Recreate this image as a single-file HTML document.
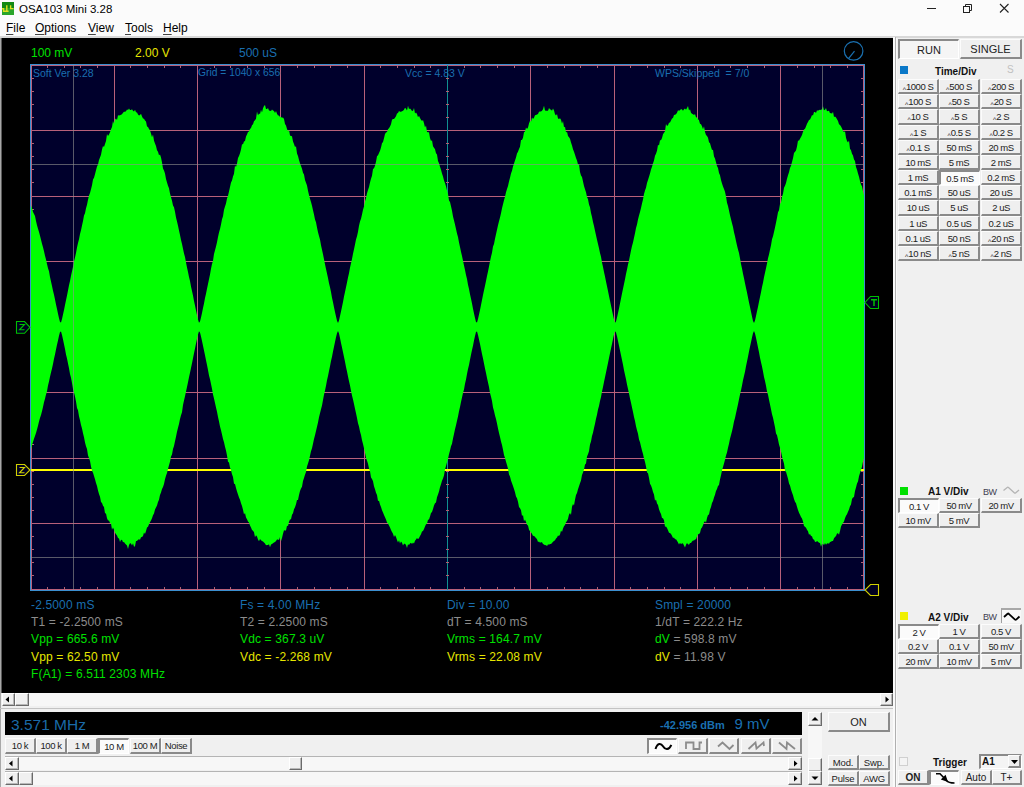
<!DOCTYPE html><html><head><meta charset="utf-8"><style>
*{margin:0;padding:0;box-sizing:border-box}
html,body{width:1024px;height:787px;overflow:hidden;background:#f0f0f0;font-family:"Liberation Sans",sans-serif}
.t{position:absolute;white-space:pre;line-height:1}
.b,.bp{position:absolute;text-align:center;white-space:pre;color:#222;background:#efefef;
  border-top:1px solid #fcfcfc;border-left:1px solid #fcfcfc;border-right:2px solid #8a8a8a;border-bottom:2px solid #8a8a8a}
.bp{background:#fbfbfb;border-top:2px solid #8a8a8a;border-left:2px solid #8a8a8a;border-right:1px solid #fff;border-bottom:1px solid #fff}
.abs{position:absolute}
.sb{position:absolute;background:#f0f0f0;border-top:1px solid #fff;border-left:1px solid #fff;border-right:1px solid #6a6a6a;border-bottom:1px solid #6a6a6a;box-shadow:inset -1px -1px 0 #b8b8b8}
</style></head><body>
<div class="abs" style="left:0;top:0;width:1024px;height:37px;background:#fbfbfb"></div>
<div class="abs" style="left:0;top:36px;width:1024px;height:2px;background:#d8d8d8"></div>
<svg class="abs" style="left:0;top:0" width="16" height="16"><rect x="2" y="2" width="12" height="13" fill="#2aa52a"/><rect x="2" y="2" width="12" height="6" fill="#138a13"/><path d="M2 8.7 H3.6 V11.3 H8.6 M6.8 11.2 V5.2 M10.6 5.2 V8.6 H13.5" fill="none" stroke="#e0e020" stroke-width="1.4"/></svg>
<div class="t" style="left:19px;top:4px;font-size:11.5px;color:#000;font-weight:normal;">OSA103 Mini 3.28</div>
<div class="abs" style="left:927px;top:8px;width:9px;height:1px;background:#222"></div>
<svg class="abs" style="left:0;top:0;overflow:visible" width="1" height="1"><rect x="963.5" y="6.5" width="6" height="6" fill="none" stroke="#222"/><path d="M965.5 6.5 V4.5 H971.5 V10.5 H969.5" fill="none" stroke="#222"/><path d="M1000 4 L1008.5 12.5 M1008.5 4 L1000 12.5" stroke="#222" stroke-width="1.1"/></svg>
<div class="t" style="left:6px;top:22px;font-size:12px;color:#000;font-weight:normal;"><u style="text-decoration:underline;text-decoration-color:#444;text-underline-offset:1.5px">F</u>ile</div>
<div class="t" style="left:35px;top:22px;font-size:12px;color:#000;font-weight:normal;"><u style="text-decoration:underline;text-decoration-color:#444;text-underline-offset:1.5px">O</u>ptions</div>
<div class="t" style="left:88px;top:22px;font-size:12px;color:#000;font-weight:normal;"><u style="text-decoration:underline;text-decoration-color:#444;text-underline-offset:1.5px">V</u>iew</div>
<div class="t" style="left:125px;top:22px;font-size:12px;color:#000;font-weight:normal;"><u style="text-decoration:underline;text-decoration-color:#444;text-underline-offset:1.5px">T</u>ools</div>
<div class="t" style="left:163px;top:22px;font-size:12px;color:#000;font-weight:normal;"><u style="text-decoration:underline;text-decoration-color:#444;text-underline-offset:1.5px">H</u>elp</div>
<div class="abs" style="left:0;top:38px;width:1px;height:749px;background:#a8a8a8"></div><div class="abs" style="left:1px;top:38px;width:1px;height:655px;background:#5a5a5a"></div>
<div class="abs" style="left:2px;top:38px;width:891px;height:655px;background:#000"></div>
<svg class="abs" style="left:0;top:0" width="1024" height="787" shape-rendering="crispEdges">
<rect x="30" y="64" width="835" height="527" fill="#3b8fd0"/>
<rect x="31" y="65" width="833" height="525" fill="#b8607a"/>
<rect x="32" y="66" width="831" height="523" fill="#00002c"/>
<rect x="114" y="65" width="1" height="525" fill="#b8607a"/>
<rect x="197" y="65" width="1" height="525" fill="#b8607a"/>
<rect x="280" y="65" width="1" height="525" fill="#b8607a"/>
<rect x="364" y="65" width="1" height="525" fill="#b8607a"/>
<rect x="530" y="65" width="1" height="525" fill="#b8607a"/>
<rect x="614" y="65" width="1" height="525" fill="#b8607a"/>
<rect x="697" y="65" width="1" height="525" fill="#b8607a"/>
<rect x="780" y="65" width="1" height="525" fill="#b8607a"/>
<rect x="31" y="130" width="833" height="1" fill="#b8607a"/>
<rect x="31" y="196" width="833" height="1" fill="#b8607a"/>
<rect x="31" y="261" width="833" height="1" fill="#b8607a"/>
<rect x="31" y="392" width="833" height="1" fill="#b8607a"/>
<rect x="31" y="458" width="833" height="1" fill="#b8607a"/>
<rect x="31" y="523" width="833" height="1" fill="#b8607a"/>
<rect x="447" y="65" width="1" height="525" fill="#109090"/>
<rect x="31" y="327" width="833" height="1" fill="#109090"/>
<path d="M47 66v1.5M47 587v2M47 326v3M64 66v1.5M64 587v2M64 326v3M80 66v1.5M80 587v2M80 326v3M97 66v1.5M97 587v2M97 326v3M130 66v1.5M130 587v2M130 326v3M147 66v1.5M147 587v2M147 326v3M164 66v1.5M164 587v2M164 326v3M180 66v1.5M180 587v2M180 326v3M214 66v1.5M214 587v2M214 326v3M230 66v1.5M230 587v2M230 326v3M247 66v1.5M247 587v2M247 326v3M264 66v1.5M264 587v2M264 326v3M297 66v1.5M297 587v2M297 326v3M314 66v1.5M314 587v2M314 326v3M330 66v1.5M330 587v2M330 326v3M347 66v1.5M347 587v2M347 326v3M380 66v1.5M380 587v2M380 326v3M397 66v1.5M397 587v2M397 326v3M414 66v1.5M414 587v2M414 326v3M430 66v1.5M430 587v2M430 326v3M464 66v1.5M464 587v2M464 326v3M480 66v1.5M480 587v2M480 326v3M497 66v1.5M497 587v2M497 326v3M514 66v1.5M514 587v2M514 326v3M547 66v1.5M547 587v2M547 326v3M564 66v1.5M564 587v2M564 326v3M580 66v1.5M580 587v2M580 326v3M597 66v1.5M597 587v2M597 326v3M630 66v1.5M630 587v2M630 326v3M647 66v1.5M647 587v2M647 326v3M664 66v1.5M664 587v2M664 326v3M680 66v1.5M680 587v2M680 326v3M714 66v1.5M714 587v2M714 326v3M730 66v1.5M730 587v2M730 326v3M747 66v1.5M747 587v2M747 326v3M764 66v1.5M764 587v2M764 326v3M797 66v1.5M797 587v2M797 326v3M814 66v1.5M814 587v2M814 326v3M830 66v1.5M830 587v2M830 326v3M847 66v1.5M847 587v2M847 326v3M32 78h2M861 78h2M446 78h3M32 91h2M861 91h2M446 91h3M32 104h2M861 104h2M446 104h3M32 117h2M861 117h2M446 117h3M32 143h2M861 143h2M446 143h3M32 156h2M861 156h2M446 156h3M32 169h2M861 169h2M446 169h3M32 182h2M861 182h2M446 182h3M32 209h2M861 209h2M446 209h3M32 222h2M861 222h2M446 222h3M32 235h2M861 235h2M446 235h3M32 248h2M861 248h2M446 248h3M32 274h2M861 274h2M446 274h3M32 287h2M861 287h2M446 287h3M32 300h2M861 300h2M446 300h3M32 313h2M861 313h2M446 313h3M32 340h2M861 340h2M446 340h3M32 353h2M861 353h2M446 353h3M32 366h2M861 366h2M446 366h3M32 379h2M861 379h2M446 379h3M32 405h2M861 405h2M446 405h3M32 418h2M861 418h2M446 418h3M32 431h2M861 431h2M446 431h3M32 444h2M861 444h2M446 444h3M32 471h2M861 471h2M446 471h3M32 484h2M861 484h2M446 484h3M32 497h2M861 497h2M446 497h3M32 510h2M861 510h2M446 510h3M32 536h2M861 536h2M446 536h3M32 549h2M861 549h2M446 549h3M32 562h2M861 562h2M446 562h3M32 575h2M861 575h2M446 575h3" stroke="#b06070" stroke-width="1" fill="none"/>
<rect x="31" y="469" width="833" height="2" fill="#ffff00"/>
<path d="M31,205.5 32,208.3 33,212.1 34,214.0 35,216.1 36,220.9 37,225.3 38,228.8 39,232.1 40,235.7 41,239.7 42,243.7 43,247.3 44,251.3 45,255.8 46,259.5 47,263.9 48,268.2 49,271.3 50,277.0 51,281.6 52,286.1 53,290.7 54,294.7 55,299.5 56,304.5 57,309.0 58,313.7 59,318.2 60,322.0 61,322.5 62,319.1 63,314.5 64,309.9 65,305.0 66,300.2 67,295.4 68,290.6 69,285.2 70,280.9 71,275.8 72,271.3 73,266.8 74,261.3 75,257.4 76,253.0 77,247.6 78,243.0 79,239.3 80,234.1 81,230.3 82,225.4 83,220.9 84,215.4 85,213.3 86,208.3 87,204.7 88,199.7 89,195.4 90,193.1 91,189.2 92,185.3 93,179.5 94,177.8 95,174.2 96,170.3 97,166.5 98,164.6 99,160.1 100,157.5 101,154.7 102,149.5 103,145.9 104,146.9 105,144.0 106,141.0 107,134.0 108,136.1 109,134.4 110,132.2 111,129.2 112,127.0 113,120.9 114,123.7 115,119.5 116,118.4 117,120.0 118,115.3 119,115.4 120,115.3 121,114.7 122,114.2 123,112.8 124,111.7 125,111.7 126,111.3 127,109.4 128,110.1 129,108.5 130,109.9 131,110.0 132,109.2 133,110.8 134,111.4 135,109.8 136,112.2 137,112.5 138,114.5 139,115.4 140,115.0 141,113.7 142,116.6 143,118.6 144,118.7 145,120.6 146,121.4 147,126.4 148,127.0 149,128.9 150,130.3 151,133.6 152,137.2 153,134.4 154,140.8 155,143.5 156,146.0 157,150.2 158,151.8 159,155.2 160,154.6 161,157.6 162,162.4 163,168.4 164,170.6 165,173.4 166,179.1 167,182.5 168,185.8 169,188.3 170,193.4 171,197.3 172,200.7 173,205.5 174,207.3 175,211.7 176,217.4 177,221.4 178,225.7 179,230.5 180,234.9 181,239.9 182,244.1 183,248.7 184,253.4 185,257.0 186,262.6 187,267.5 188,271.9 189,276.9 190,280.9 191,286.4 192,291.1 193,295.6 194,300.9 195,305.5 196,310.4 197,315.0 198,319.6 199,322.8 200,321.6 201,317.6 202,312.9 203,308.1 204,303.4 205,298.1 206,293.8 207,288.7 208,283.9 209,279.3 210,274.6 211,268.7 212,264.1 213,260.7 214,253.9 215,250.2 216,246.4 217,242.3 218,237.0 219,232.5 220,229.1 221,224.6 222,219.3 223,216.3 224,209.8 225,206.6 226,203.5 227,198.5 228,195.7 229,191.6 230,186.9 231,182.6 232,180.5 233,176.5 234,173.8 235,165.6 236,167.0 237,163.5 238,158.0 239,156.1 240,153.3 241,149.6 242,144.3 243,144.3 244,141.4 245,141.0 246,136.4 247,134.4 248,132.0 249,131.4 250,129.1 251,127.9 252,125.3 253,124.2 254,121.2 255,120.2 256,118.8 257,111.6 258,115.4 259,113.5 260,113.9 261,109.8 262,112.4 263,108.3 264,106.1 265,105.0 266,109.0 267,109.0 268,108.1 269,110.4 270,110.8 271,111.0 272,109.5 273,110.5 274,111.1 275,112.9 276,111.0 277,113.7 278,115.6 279,115.4 280,116.9 281,117.1 282,117.7 283,117.5 284,119.1 285,123.9 286,125.6 287,129.0 288,131.4 289,129.8 290,135.5 291,136.1 292,136.2 293,141.4 294,144.1 295,146.9 296,146.2 297,153.5 298,155.9 299,159.9 300,163.3 301,166.0 302,168.7 303,172.8 304,174.4 305,180.0 306,182.8 307,185.5 308,190.8 309,195.1 310,198.7 311,202.0 312,205.7 313,210.3 314,214.5 315,219.4 316,222.2 317,227.6 318,232.2 319,236.1 320,239.4 321,245.2 322,249.8 323,254.2 324,259.2 325,264.2 326,269.0 327,273.6 328,278.1 329,283.3 330,287.3 331,292.0 332,297.7 333,302.2 334,307.3 335,312.0 336,316.6 337,320.8 338,323.0 339,320.4 340,316.0 341,311.5 342,306.8 343,301.9 344,296.6 345,292.1 346,287.3 347,282.5 348,277.5 349,273.2 350,267.7 351,263.2 352,259.0 353,253.8 354,249.3 355,244.6 356,239.6 357,236.3 358,231.7 359,225.8 360,221.6 361,218.7 362,214.4 363,209.8 364,206.4 365,201.3 366,198.1 367,193.2 368,189.9 369,187.0 370,182.4 371,178.8 372,175.7 373,168.9 374,168.3 375,165.8 376,161.7 377,156.2 378,155.2 379,153.1 380,150.8 381,147.4 382,143.3 383,142.0 384,138.3 385,133.9 386,132.4 387,132.1 388,129.3 389,128.2 390,126.6 391,124.2 392,119.8 393,118.9 394,119.1 395,117.7 396,116.3 397,113.4 398,113.1 399,111.1 400,111.8 401,111.8 402,111.3 403,110.7 404,109.8 405,107.8 406,108.7 407,110.6 408,105.7 409,108.9 410,108.5 411,109.4 412,111.0 413,110.7 414,108.0 415,113.4 416,112.5 417,113.9 418,117.3 419,115.8 420,118.1 421,119.7 422,121.1 423,120.0 424,123.3 425,127.4 426,125.6 427,132.1 428,132.2 429,132.3 430,138.1 431,141.1 432,140.3 433,146.3 434,147.8 435,149.2 436,153.3 437,154.5 438,160.9 439,163.2 440,166.7 441,169.8 442,173.5 443,176.4 444,180.5 445,182.9 446,186.3 447,190.5 448,194.1 449,200.5 450,201.9 451,206.2 452,210.8 453,216.4 454,220.4 455,224.4 456,229.0 457,233.4 458,236.9 459,242.5 460,247.1 461,251.7 462,255.9 463,260.7 464,265.6 465,270.1 466,275.0 467,278.9 468,284.8 469,289.1 470,294.2 471,298.8 472,303.6 473,308.8 474,313.6 475,318.0 476,321.9 477,322.6 478,319.0 479,314.6 480,309.9 481,305.0 482,300.0 483,294.9 484,290.2 485,285.8 486,280.9 487,276.0 488,271.6 489,266.4 490,261.3 491,256.8 492,252.7 493,246.5 494,243.9 495,238.8 496,234.2 497,229.7 498,225.2 499,221.3 500,217.6 501,213.2 502,208.2 503,204.3 504,200.2 505,196.7 506,192.2 507,189.1 508,185.9 509,181.6 510,177.7 511,173.5 512,170.7 513,166.6 514,163.5 515,160.6 516,157.6 517,153.5 518,151.8 519,149.1 520,146.8 521,139.9 522,140.1 523,137.8 524,132.2 525,131.4 526,127.5 527,129.1 528,127.5 529,123.4 530,120.8 531,121.7 532,117.4 533,118.9 534,117.7 535,115.2 536,115.1 537,114.6 538,114.1 539,111.8 540,111.6 541,111.5 542,110.7 543,109.3 544,105.8 545,110.6 546,110.8 547,110.8 548,110.8 549,108.1 550,109.2 551,109.8 552,110.8 553,108.6 554,110.4 555,114.3 556,115.4 557,114.0 558,118.5 559,118.9 560,118.2 561,119.7 562,123.7 563,121.1 564,127.2 565,126.7 566,132.6 567,131.7 568,136.1 569,137.3 570,138.8 571,142.5 572,145.6 573,149.2 574,151.7 575,154.8 576,158.1 577,160.5 578,164.4 579,164.2 580,171.9 581,175.4 582,177.1 583,181.4 584,186.1 585,189.2 586,192.3 587,197.0 588,199.3 589,204.6 590,207.2 591,213.1 592,217.0 593,222.0 594,226.1 595,230.7 596,235.2 597,239.8 598,244.1 599,248.3 600,252.9 601,256.7 602,262.5 603,267.1 604,272.0 605,276.5 606,281.4 607,286.3 608,290.9 609,296.1 610,300.8 611,305.6 612,310.2 613,315.1 614,319.5 615,322.7 616,321.6 617,317.6 618,313.1 619,308.4 620,303.4 621,298.6 622,293.5 623,288.8 624,284.1 625,279.2 626,274.1 627,269.5 628,264.5 629,260.6 630,255.4 631,250.5 632,246.0 633,242.4 634,237.7 635,233.3 636,228.1 637,224.6 638,219.4 639,215.6 640,212.0 641,208.0 642,203.4 643,199.5 644,194.1 645,190.6 646,187.8 647,183.0 648,180.0 649,176.7 650,173.5 651,169.5 652,166.7 653,163.2 654,160.4 655,155.7 656,153.7 657,150.7 658,144.7 659,145.4 660,140.2 661,140.2 662,137.9 663,134.3 664,132.8 665,131.2 666,124.0 667,126.1 668,125.2 669,122.8 670,122.6 671,120.6 672,118.6 673,118.1 674,114.9 675,114.8 676,114.3 677,112.7 678,110.2 679,110.8 680,110.3 681,109.1 682,109.4 683,110.8 684,109.2 685,108.6 686,109.8 687,108.0 688,106.1 689,110.5 690,109.2 691,112.7 692,113.7 693,114.3 694,114.9 695,113.9 696,117.3 697,117.5 698,119.2 699,120.3 700,123.8 701,124.3 702,126.2 703,129.2 704,126.2 705,132.1 706,135.1 707,136.0 708,137.8 709,142.3 710,143.3 711,146.8 712,150.1 713,149.7 714,156.6 715,158.4 716,162.2 717,166.0 718,168.1 719,173.1 720,175.3 721,180.1 722,183.5 723,186.5 724,189.1 725,191.7 726,196.6 727,202.8 728,205.9 729,210.4 730,215.3 731,219.2 732,223.3 733,227.1 734,232.2 735,236.2 736,240.9 737,245.4 738,249.6 739,253.0 740,258.3 741,263.9 742,268.4 743,273.8 744,278.2 745,283.2 746,288.0 747,292.5 748,297.4 749,302.4 750,307.0 751,311.8 752,316.6 753,320.9 754,322.9 755,320.4 756,316.0 757,311.3 758,306.7 759,301.7 760,296.9 761,292.3 762,287.1 763,282.8 764,277.2 765,272.7 766,268.2 767,263.6 768,258.3 769,254.5 770,249.7 771,245.2 772,239.2 773,236.3 774,232.1 775,227.4 776,222.7 777,217.8 778,212.2 779,210.3 780,204.1 781,202.2 782,196.8 783,193.8 784,187.8 785,185.8 786,182.9 787,178.7 788,175.2 789,172.3 790,168.1 791,165.8 792,161.9 793,158.3 794,153.1 795,151.7 796,150.6 797,146.4 798,140.5 799,140.7 800,138.8 801,137.1 802,135.0 803,131.8 804,129.4 805,128.7 806,126.5 807,123.8 808,121.9 809,120.0 810,119.4 811,117.4 812,114.9 813,115.6 814,112.1 815,112.0 816,112.9 817,110.2 818,110.8 819,109.9 820,109.7 821,110.0 822,108.9 823,106.3 824,110.2 825,109.8 826,107.9 827,111.2 828,111.0 829,110.8 830,113.3 831,112.9 832,113.8 833,111.8 834,117.1 835,116.4 836,117.5 837,119.2 838,120.9 839,124.3 840,124.9 841,126.5 842,128.4 843,130.8 844,132.3 845,130.9 846,137.8 847,141.1 848,142.5 849,140.6 850,148.7 851,150.3 852,153.8 853,155.6 854,159.4 855,161.0 856,167.0 857,169.8 858,173.4 859,176.8 860,181.0 861,184.5 862,186.3 863,191.2 864,195.2 864,458.3 863,461.6 862,466.8 861,470.0 860,472.9 859,476.2 858,481.4 857,483.6 856,487.5 855,490.9 854,497.1 853,497.6 852,499.1 851,504.5 850,506.3 849,509.5 848,511.8 847,514.2 846,515.7 845,518.3 844,521.6 843,523.1 842,524.6 841,526.5 840,530.9 839,534.8 838,533.3 837,533.4 836,536.1 835,536.9 834,538.3 833,541.1 832,541.0 831,541.7 830,541.9 829,543.7 828,543.3 827,543.6 826,544.8 825,543.0 824,545.3 823,543.7 822,543.9 821,546.7 820,543.1 819,542.7 818,541.7 817,541.1 816,541.9 815,541.7 814,539.4 813,539.3 812,536.3 811,536.1 810,534.1 809,534.7 808,531.3 807,529.8 806,527.7 805,526.8 804,526.0 803,521.4 802,518.5 801,516.9 800,514.8 799,512.8 798,510.1 797,506.8 796,503.3 795,501.8 794,498.9 793,495.3 792,492.6 791,489.6 790,485.5 789,483.6 788,478.8 787,475.2 786,471.7 785,470.9 784,463.6 783,460.2 782,456.6 781,451.6 780,447.8 779,444.5 778,439.5 777,435.3 776,433.5 775,427.2 774,422.4 773,417.7 772,414.2 771,409.3 770,404.4 769,399.7 768,394.8 767,391.5 766,385.7 765,381.1 764,376.9 763,371.5 762,366.6 761,362.3 760,357.7 759,352.2 758,347.5 757,342.5 756,337.8 755,333.6 754,331.0 753,333.2 752,337.4 751,342.2 750,346.7 749,351.6 748,356.8 747,361.4 746,366.3 745,371.7 744,376.0 743,380.2 742,385.4 741,390.2 740,394.4 739,399.3 738,404.2 737,408.7 736,413.2 735,417.9 734,421.6 733,426.8 732,431.3 731,435.1 730,438.8 729,443.7 728,447.8 727,452.4 726,455.4 725,459.7 724,463.6 723,467.0 722,470.4 721,475.3 720,479.5 719,485.1 718,486.0 717,488.9 716,491.0 715,494.8 714,497.6 713,500.9 712,502.9 711,506.9 710,509.8 709,514.5 708,515.1 707,518.0 706,522.8 705,521.1 704,522.6 703,525.3 702,527.4 701,528.7 700,533.0 699,534.0 698,534.3 697,536.5 696,539.2 695,539.4 694,540.4 693,540.4 692,541.6 691,543.0 690,543.1 689,544.7 688,544.2 687,543.0 686,544.8 685,547.5 684,545.5 683,543.4 682,543.3 681,544.2 680,542.8 679,544.4 678,542.6 677,540.8 676,539.3 675,539.3 674,537.4 673,537.9 672,535.7 671,533.9 670,532.9 669,532.7 668,530.2 667,527.9 666,526.6 665,526.8 664,520.3 663,518.3 662,518.1 661,514.0 660,512.0 659,509.2 658,505.1 657,503.5 656,499.5 655,500.8 654,494.5 653,491.9 652,488.2 651,485.5 650,483.7 649,477.9 648,473.3 647,472.5 646,466.4 645,462.0 644,458.4 643,454.1 642,450.5 641,446.5 640,442.3 639,439.5 638,433.8 637,430.2 636,426.2 635,421.0 634,416.9 633,411.9 632,407.5 631,402.7 630,398.4 629,393.5 628,389.0 627,384.6 626,379.3 625,374.7 624,370.3 623,364.8 622,360.1 621,355.3 620,350.6 619,345.8 618,340.9 617,336.3 616,332.4 615,331.3 614,334.5 613,338.9 612,343.9 611,348.4 610,353.2 609,358.0 608,362.9 607,367.7 606,372.5 605,377.3 604,382.1 603,387.1 602,391.5 601,397.1 600,400.9 599,406.0 598,409.6 597,414.7 596,418.7 595,423.7 594,427.9 593,432.7 592,436.1 591,441.6 590,444.5 589,451.2 588,454.2 587,456.5 586,463.4 585,464.6 584,469.6 583,472.5 582,475.0 581,480.4 580,483.3 579,486.3 578,489.3 577,493.0 576,494.9 575,499.7 574,505.5 573,504.1 572,506.8 571,514.9 570,512.9 569,514.6 568,518.8 567,521.1 566,522.2 565,524.9 564,526.2 563,528.4 562,532.1 561,530.6 560,534.5 559,535.9 558,535.6 557,537.5 556,538.4 555,540.3 554,541.0 553,541.7 552,543.1 551,543.9 550,544.1 549,544.7 548,544.2 547,546.2 546,544.9 545,545.2 544,544.6 543,544.0 542,542.2 541,542.3 540,542.7 539,541.5 538,541.9 537,539.3 536,537.9 535,537.1 534,535.7 533,536.1 532,533.8 531,532.4 530,531.2 529,529.8 528,525.5 527,524.7 526,521.9 525,519.4 524,521.2 523,515.0 522,515.9 521,510.3 520,508.3 519,506.9 518,501.7 517,498.3 516,496.6 515,492.3 514,489.0 513,486.0 512,483.2 511,480.6 510,476.6 509,474.5 508,468.8 507,465.0 506,461.8 505,458.0 504,455.1 503,449.7 502,444.9 501,441.6 500,437.1 499,432.9 498,428.4 497,423.6 496,419.1 495,415.5 494,410.9 493,407.5 492,401.1 491,396.8 490,393.0 489,387.1 488,382.4 487,378.1 486,372.9 485,368.4 484,363.6 483,358.5 482,354.1 481,349.0 480,344.1 479,339.4 478,335.0 477,331.5 476,332.1 475,335.9 474,340.4 473,345.7 472,350.0 471,354.8 470,359.7 469,365.1 468,369.1 467,374.0 466,379.4 465,383.7 464,389.4 463,393.1 462,397.5 461,402.0 460,406.9 459,411.2 458,416.4 457,420.8 456,425.2 455,429.2 454,434.1 453,438.5 452,443.8 451,446.3 450,450.5 449,454.3 448,458.7 447,462.2 446,466.1 445,469.6 444,475.5 443,478.5 442,480.7 441,484.2 440,487.2 439,491.5 438,494.4 437,497.3 436,502.4 435,503.3 434,505.6 433,508.9 432,512.1 431,513.0 430,516.4 429,519.6 428,519.7 427,523.8 426,524.2 425,526.6 424,529.0 423,531.0 422,531.6 421,534.3 420,536.0 419,537.9 418,539.2 417,537.9 416,539.6 415,540.7 414,543.4 413,542.5 412,543.9 411,542.8 410,543.6 409,545.0 408,544.3 407,548.0 406,544.9 405,543.7 404,543.8 403,545.4 402,542.7 401,541.4 400,543.5 399,540.3 398,542.4 397,540.1 396,536.9 395,535.0 394,536.9 393,533.7 392,531.9 391,530.1 390,527.5 389,525.4 388,523.6 387,522.5 386,519.5 385,517.2 384,514.9 383,512.4 382,510.2 381,507.0 380,504.4 379,500.8 378,501.1 377,495.0 376,492.7 375,489.3 374,486.3 373,481.3 372,479.0 371,477.5 370,471.2 369,468.5 368,463.7 367,460.8 366,457.8 365,452.7 364,448.3 363,444.1 362,440.2 361,435.0 360,431.5 359,426.4 358,423.3 357,418.0 356,413.2 355,408.7 354,404.1 353,399.5 352,395.4 351,390.8 350,385.6 349,381.3 348,376.5 347,371.4 346,367.0 345,361.7 344,356.9 343,352.3 342,347.5 341,342.9 340,337.9 339,333.6 338,331.1 337,333.2 336,337.3 335,341.9 334,346.8 333,351.6 332,356.7 331,361.1 330,366.3 329,371.1 328,376.0 327,380.2 326,385.8 325,390.4 324,394.7 323,400.1 322,405.6 321,409.2 320,413.2 319,417.2 318,422.4 317,426.7 316,430.9 315,435.2 314,438.9 313,443.7 312,448.3 311,451.3 310,455.8 309,460.2 308,463.4 307,466.5 306,472.1 305,474.7 304,478.0 303,481.1 302,486.8 301,488.5 300,490.9 299,495.1 298,499.9 297,499.9 296,504.3 295,507.3 294,509.2 293,513.2 292,514.8 291,519.2 290,519.6 289,521.8 288,525.9 287,525.7 286,530.4 285,530.4 284,530.2 283,533.8 282,537.9 281,541.3 280,537.1 279,539.9 278,539.4 277,539.5 276,541.1 275,542.0 274,542.6 273,543.2 272,544.0 271,544.6 270,547.3 269,544.3 268,545.1 267,544.9 266,545.2 265,543.5 264,542.4 263,541.6 262,541.0 261,540.3 260,539.1 259,541.2 258,539.5 257,536.5 256,535.2 255,537.2 254,532.2 253,530.7 252,529.9 251,527.6 250,525.6 249,522.4 248,521.5 247,519.2 246,517.4 245,513.1 244,514.6 243,509.8 242,506.0 241,503.3 240,499.7 239,497.4 238,494.5 237,491.5 236,488.1 235,483.9 234,483.7 233,476.9 232,474.3 231,470.3 230,467.4 229,462.5 228,461.7 227,455.4 226,450.6 225,446.7 224,442.3 223,438.9 222,434.4 221,430.2 220,426.6 219,421.4 218,417.0 217,411.8 216,407.4 215,403.1 214,398.6 213,394.6 212,388.7 211,384.0 210,379.3 209,375.4 208,370.0 207,365.1 206,360.3 205,355.3 204,350.6 203,345.7 202,341.0 201,336.5 200,332.4 199,331.2 198,334.5 197,338.9 196,343.6 195,348.5 194,353.3 193,358.2 192,363.3 191,367.9 190,372.7 189,377.2 188,382.2 187,387.1 186,391.4 185,396.3 184,400.6 183,405.1 182,412.2 181,415.3 180,419.0 179,423.9 178,427.7 177,431.8 176,436.7 175,441.2 174,446.1 173,448.9 172,454.5 171,456.5 170,461.7 169,465.3 168,469.0 167,473.0 166,475.7 165,479.3 164,483.9 163,487.0 162,489.1 161,492.6 160,494.9 159,499.7 158,501.9 157,505.5 156,507.6 155,509.5 154,513.6 153,515.3 152,518.2 151,520.5 150,522.3 149,524.3 148,526.8 147,527.4 146,531.0 145,534.0 144,532.6 143,536.1 142,537.1 141,537.2 140,539.7 139,539.2 138,539.7 137,540.9 136,541.0 135,546.3 134,546.7 133,543.3 132,545.4 131,543.6 130,543.2 129,545.1 128,549.0 127,545.5 126,544.5 125,543.6 124,541.9 123,542.3 122,539.7 121,539.9 120,542.0 119,538.6 118,538.0 117,535.5 116,534.3 115,532.7 114,529.7 113,527.6 112,529.8 111,523.5 110,523.0 109,520.4 108,520.6 107,518.3 106,513.5 105,513.3 104,507.0 103,505.8 102,503.1 101,502.0 100,496.7 99,493.9 98,490.5 97,486.0 96,483.0 95,479.2 94,476.1 93,472.7 92,470.8 91,466.4 90,461.0 89,457.9 88,455.4 87,448.9 86,446.2 85,442.4 84,437.2 83,433.2 82,428.5 81,424.9 80,420.2 79,416.3 78,410.3 77,408.1 76,401.4 75,396.6 74,392.6 73,388.9 72,382.9 71,377.7 70,374.0 69,368.3 68,363.6 67,358.5 66,354.5 65,348.9 64,344.3 63,339.4 62,335.0 61,331.5 60,332.0 59,335.8 58,340.4 57,344.8 56,349.6 55,354.4 54,358.8 53,363.9 52,368.4 51,372.5 50,376.7 49,381.6 48,385.6 47,391.3 46,394.5 45,398.7 44,402.2 43,406.9 42,411.3 41,414.9 40,418.0 39,421.4 38,425.7 37,429.5 36,433.0 35,436.1 34,438.8 33,442.0 32,445.1 31,449.0Z" fill="#00ff00" shape-rendering="auto"/>
<rect x="73" y="65" width="1" height="525" fill="#909090" fill-opacity="0.62"/>
<rect x="822" y="65" width="1" height="525" fill="#909090" fill-opacity="0.62"/>
<rect x="31" y="164" width="833" height="1" fill="#909090" fill-opacity="0.62"/>
<rect x="31" y="557" width="833" height="1" fill="#909090" fill-opacity="0.62"/>
<g shape-rendering="auto" stroke-width="1.1">
<path d="M16.5 321.5 H24.5 L30 327.3 L24.5 333.3 H16.5 Z" fill="#000020" stroke="#00c000"/>
<path d="M19.5 324.5 H24.5 L19.5 329.8 H24.5" fill="none" stroke="#00c000"/>
<path d="M16.5 464.5 H24.5 L30 470 L24.5 475.5 H16.5 Z" fill="#000020" stroke="#d0d000"/>
<path d="M19.5 467.5 H24.5 L19.5 472.8 H24.5" fill="none" stroke="#d0d000"/>
<path d="M878.5 296.5 H870.5 L865 302.5 L870.5 308.5 H878.5 Z" fill="#000020" stroke="#00c000"/>
<path d="M871 299.8 H877 M874 299.8 V306" fill="none" stroke="#00c000" stroke-width="1.5"/>
<path d="M878.5 584.5 H870.5 L865 590 L870.5 595.5 H878.5 Z" fill="#000020" stroke="#d0d000"/>
</g>
<circle cx="853.6" cy="50.9" r="9.3" fill="none" stroke="#1a70b0" stroke-width="1.2" shape-rendering="auto"/>
<path d="M848.7 58.3 L854.5 51.2" stroke="#1a70b0" stroke-width="1.2" shape-rendering="auto"/>
</svg>
<div class="t" style="left:31px;top:47px;font-size:12px;color:#00e000;font-weight:normal;">100 mV</div>
<div class="t" style="left:135px;top:47px;font-size:12px;color:#e6e600;font-weight:normal;">2.00 V</div>
<div class="t" style="left:239px;top:47px;font-size:12px;color:#1a6fb0;font-weight:normal;">500 uS</div>
<div class="t" style="left:33px;top:67.5px;font-size:10.5px;color:#1a6fb0;font-weight:normal;">Soft Ver 3.28</div>
<div class="t" style="left:198px;top:67.5px;font-size:10.3px;color:#1a6fb0;font-weight:normal;">Grid = 1040 x 656</div>
<div class="t" style="left:405px;top:67.5px;font-size:10.5px;color:#1a6fb0;font-weight:normal;">Vcc = 4.83 V</div>
<div class="t" style="left:655px;top:67.5px;font-size:10.5px;color:#1a6fb0;font-weight:normal;">WPS/Skipped  = 7/0</div>
<div class="t" style="left:31px;top:598.7px;font-size:12px;color:#1a6fb0;font-weight:normal;letter-spacing:0.15px">-2.5000 mS</div>
<div class="t" style="left:240px;top:598.7px;font-size:12px;color:#1a6fb0;font-weight:normal;letter-spacing:0.15px">Fs = 4.00 MHz</div>
<div class="t" style="left:447px;top:598.7px;font-size:12px;color:#1a6fb0;font-weight:normal;letter-spacing:0.15px">Div = 10.00</div>
<div class="t" style="left:655px;top:598.7px;font-size:12px;color:#1a6fb0;font-weight:normal;letter-spacing:0.15px">Smpl = 20000</div>
<div class="t" style="left:31px;top:616.0500000000001px;font-size:12px;color:#8c8c8c;font-weight:normal;letter-spacing:0.15px">T1 = -2.2500 mS</div>
<div class="t" style="left:240px;top:616.0500000000001px;font-size:12px;color:#8c8c8c;font-weight:normal;letter-spacing:0.15px">T2 = 2.2500 mS</div>
<div class="t" style="left:447px;top:616.0500000000001px;font-size:12px;color:#8c8c8c;font-weight:normal;letter-spacing:0.15px">dT = 4.500 mS</div>
<div class="t" style="left:655px;top:616.0500000000001px;font-size:12px;color:#8c8c8c;font-weight:normal;letter-spacing:0.15px">1/dT = 222.2 Hz</div>
<div class="t" style="left:31px;top:633.4000000000001px;font-size:12px;color:#00e000;font-weight:normal;letter-spacing:0.15px">Vpp = 665.6 mV</div>
<div class="t" style="left:240px;top:633.4000000000001px;font-size:12px;color:#00e000;font-weight:normal;letter-spacing:0.15px">Vdc = 367.3 uV</div>
<div class="t" style="left:447px;top:633.4000000000001px;font-size:12px;color:#00e000;font-weight:normal;letter-spacing:0.15px">Vrms = 164.7 mV</div>
<div class="t" style="left:655px;top:633.4000000000001px;font-size:12px;color:#8c8c8c;font-weight:normal;letter-spacing:0.15px"><span style="color:#00e000">dV</span> = 598.8 mV</div>
<div class="t" style="left:31px;top:650.75px;font-size:12px;color:#e6e600;font-weight:normal;letter-spacing:0.15px">Vpp = 62.50 mV</div>
<div class="t" style="left:240px;top:650.75px;font-size:12px;color:#e6e600;font-weight:normal;letter-spacing:0.15px">Vdc = -2.268 mV</div>
<div class="t" style="left:447px;top:650.75px;font-size:12px;color:#e6e600;font-weight:normal;letter-spacing:0.15px">Vrms = 22.08 mV</div>
<div class="t" style="left:655px;top:650.75px;font-size:12px;color:#8c8c8c;font-weight:normal;letter-spacing:0.15px"><span style="color:#e6e600">dV</span> = 11.98 V</div>
<div class="t" style="left:31px;top:668.1px;font-size:12px;color:#00e000;font-weight:normal;letter-spacing:0.15px">F(A1) = 6.511 2303 MHz</div>
<div class="abs" style="left:2px;top:693px;width:891px;height:13px;background:#f7f7f7"></div>
<div class="sb" style="left:2px;top:693px;width:13px;height:13px"></div><svg class="abs" style="left:0;top:0;overflow:visible" width="1" height="1"><path d="M9.0 696.5 L5.5 699.5 L9.0 702.5Z" fill="#000"/></svg>
<div class="sb" style="left:15px;top:693px;width:14px;height:13px"></div>
<div class="sb" style="left:880px;top:693px;width:13px;height:13px"></div><svg class="abs" style="left:0;top:0;overflow:visible" width="1" height="1"><path d="M885.5 696.5 L889.0 699.5 L885.5 702.5Z" fill="#000"/></svg>
<div class="abs" style="left:0;top:708px;width:895px;height:1px;background:#c4c4c4"></div>
<div class="abs" style="left:5px;top:712px;width:797px;height:23px;background:#000"></div>
<div class="t" style="left:11px;top:716.5px;font-size:15.5px;color:#1a6aa8">3.571 MHz</div>
<div class="t" style="left:660px;top:719.5px;font-size:11px;color:#1a6fb0;font-weight:bold">-42.956 dBm</div>
<div class="t" style="left:734.5px;top:716px;font-size:15px;color:#1a6fb0">9 mV</div>
<div class="b" style="left:5px;top:738px;width:31px;height:16px;line-height:14px;font-size:9.5px;letter-spacing:-0.4px">10 k</div>
<div class="b" style="left:36px;top:738px;width:31px;height:16px;line-height:14px;font-size:9.5px;letter-spacing:-0.4px">100 k</div>
<div class="b" style="left:67px;top:738px;width:31px;height:16px;line-height:14px;font-size:9.5px;letter-spacing:-0.4px">1 M</div>
<div class="bp" style="left:98px;top:738px;width:31px;height:16px;line-height:14px;font-size:9.5px;letter-spacing:-0.4px">10 M</div>
<div class="b" style="left:130px;top:738px;width:31px;height:16px;line-height:14px;font-size:9.5px;letter-spacing:-0.4px">100 M</div>
<div class="b" style="left:161px;top:738px;width:31px;height:16px;line-height:14px;font-size:9.5px;letter-spacing:-0.4px">Noise</div>
<div class="bp" style="left:647px;top:738px;width:30px;height:16px"></div>
<div class="b" style="left:678px;top:738px;width:30px;height:16px"></div>
<div class="b" style="left:709px;top:738px;width:30px;height:16px"></div>
<div class="b" style="left:741px;top:738px;width:30px;height:16px"></div>
<div class="b" style="left:772px;top:738px;width:30px;height:16px"></div>
<svg class="abs" style="left:0;top:0;overflow:visible" width="1" height="1" fill="none" stroke-linejoin="miter"><path d="M655.5 749 C657.5 742.5 661 743 663 746.3 C665 749.8 669 750.5 671.3 744.8" stroke="#000" stroke-width="2"/><path d="M686 749 V742.5 H693.5 V749 H699.5 V742.5 H702" stroke="#8c8c8c" stroke-width="1.8"/><path d="M718 746.5 L722.5 742.5 L729.5 749 L733.5 745" stroke="#8c8c8c" stroke-width="1.8"/><path d="M748.5 749 L755.5 742.5 L756.5 748.5 L763.5 742.5 L764 746" stroke="#8c8c8c" stroke-width="1.8"/><path d="M779 742.5 L786.5 749 L787 742.5 L795 749" stroke="#8c8c8c" stroke-width="1.8"/></svg>
<div class="abs" style="left:5px;top:757px;width:797px;height:13px;background:#f7f7f7"></div>
<div class="sb" style="left:5px;top:757px;width:14px;height:13px"></div><svg class="abs" style="left:0;top:0;overflow:visible" width="1" height="1"><path d="M12.5 760.5 L9.0 763.5 L12.5 766.5Z" fill="#000"/></svg>
<div class="sb" style="left:289px;top:757px;width:13px;height:13px"></div>
<div class="sb" style="left:788px;top:757px;width:14px;height:13px"></div><svg class="abs" style="left:0;top:0;overflow:visible" width="1" height="1"><path d="M794.0 760.5 L797.5 763.5 L794.0 766.5Z" fill="#000"/></svg>
<div class="abs" style="left:5px;top:771px;width:797px;height:1px;background:#b4b4b4"></div><div class="abs" style="left:5px;top:756px;width:797px;height:1px;background:#b4b4b4"></div>
<div class="abs" style="left:5px;top:772px;width:797px;height:13px;background:#f7f7f7"></div>
<div class="sb" style="left:5px;top:772px;width:14px;height:13px"></div><svg class="abs" style="left:0;top:0;overflow:visible" width="1" height="1"><path d="M12.5 775.5 L9.0 778.5 L12.5 781.5Z" fill="#000"/></svg>
<div class="sb" style="left:19px;top:772px;width:14px;height:13px"></div>
<div class="sb" style="left:788px;top:772px;width:14px;height:13px"></div><svg class="abs" style="left:0;top:0;overflow:visible" width="1" height="1"><path d="M794.0 775.5 L797.5 778.5 L794.0 781.5Z" fill="#000"/></svg>
<div class="abs" style="left:808px;top:712px;width:14px;height:73px;background:#f7f7f7"></div>
<div class="sb" style="left:808px;top:712px;width:14px;height:14px"></div><svg class="abs" style="left:0;top:0;overflow:visible" width="1" height="1"><path d="M811.5 720.5 L815.0 717.0 L818.5 720.5Z" fill="#000"/></svg>
<div class="sb" style="left:808px;top:758px;width:14px;height:14px"></div>
<div class="sb" style="left:808px;top:771px;width:14px;height:14px"></div><svg class="abs" style="left:0;top:0;overflow:visible" width="1" height="1"><path d="M811.5 776.5 L815.0 780.0 L818.5 776.5Z" fill="#000"/></svg>
<div class="b" style="left:828px;top:712px;width:62px;height:20px;line-height:18px;font-size:11px">ON</div>
<div class="b" style="left:828px;top:755px;width:31px;height:15px;line-height:13px;font-size:9.5px;letter-spacing:-0.2px">Mod.</div>
<div class="b" style="left:859px;top:755px;width:31px;height:15px;line-height:13px;font-size:9.5px;letter-spacing:-0.2px">Swp.</div>
<div class="b" style="left:828px;top:771px;width:31px;height:15px;line-height:13px;font-size:9.5px;letter-spacing:-0.2px">Pulse</div>
<div class="b" style="left:859px;top:771px;width:31px;height:15px;line-height:13px;font-size:9.5px;letter-spacing:-0.2px">AWG</div>
<div class="abs" style="left:893px;top:37px;width:2px;height:750px;background:#fafafa"></div>
<div class="abs" style="left:895px;top:37px;width:1px;height:750px;background:#b0b0b0"></div><div class="abs" style="left:896px;top:37px;width:1px;height:750px;background:#fafafa"></div>
<div class="abs" style="left:896px;top:37px;width:128px;height:1px;background:#d8d8d8"></div>
<div class="bp" style="left:898px;top:39px;width:61px;height:20px;line-height:18px;font-size:11px;background:#f5f5f5">RUN</div>
<div class="b" style="left:960px;top:39px;width:62px;height:20px;line-height:19px;font-size:11px">SINGLE</div>
<div class="abs" style="left:900px;top:66px;width:8px;height:8px;background:#0a78c8"></div>
<div class="t" style="left:935px;top:67px;font-size:10px;font-weight:bold;color:#111">Time/Div</div>
<div class="t" style="left:1007px;top:65px;font-size:10px;color:#c0c0c0">S</div>
<div class="b" style="left:898px;top:79px;width:41px;height:15px;line-height:14.5px;font-size:9.5px;letter-spacing:-0.45px"><span style="font-size:7px;vertical-align:-2px;letter-spacing:0">^</span>1000 S</div>
<div class="b" style="left:939px;top:79px;width:41px;height:15px;line-height:14.5px;font-size:9.5px;letter-spacing:-0.45px"><span style="font-size:7px;vertical-align:-2px;letter-spacing:0">^</span>500 S</div>
<div class="b" style="left:981px;top:79px;width:41px;height:15px;line-height:14.5px;font-size:9.5px;letter-spacing:-0.45px"><span style="font-size:7px;vertical-align:-2px;letter-spacing:0">^</span>200 S</div>
<div class="b" style="left:898px;top:94px;width:41px;height:15px;line-height:14.5px;font-size:9.5px;letter-spacing:-0.45px"><span style="font-size:7px;vertical-align:-2px;letter-spacing:0">^</span>100 S</div>
<div class="b" style="left:939px;top:94px;width:41px;height:15px;line-height:14.5px;font-size:9.5px;letter-spacing:-0.45px"><span style="font-size:7px;vertical-align:-2px;letter-spacing:0">^</span>50 S</div>
<div class="b" style="left:981px;top:94px;width:41px;height:15px;line-height:14.5px;font-size:9.5px;letter-spacing:-0.45px"><span style="font-size:7px;vertical-align:-2px;letter-spacing:0">^</span>20 S</div>
<div class="b" style="left:898px;top:109px;width:41px;height:16px;line-height:14.5px;font-size:9.5px;letter-spacing:-0.45px"><span style="font-size:7px;vertical-align:-2px;letter-spacing:0">^</span>10 S</div>
<div class="b" style="left:939px;top:109px;width:41px;height:16px;line-height:14.5px;font-size:9.5px;letter-spacing:-0.45px"><span style="font-size:7px;vertical-align:-2px;letter-spacing:0">^</span>5 S</div>
<div class="b" style="left:981px;top:109px;width:41px;height:16px;line-height:14.5px;font-size:9.5px;letter-spacing:-0.45px"><span style="font-size:7px;vertical-align:-2px;letter-spacing:0">^</span>2 S</div>
<div class="b" style="left:898px;top:125px;width:41px;height:15px;line-height:14.5px;font-size:9.5px;letter-spacing:-0.45px"><span style="font-size:7px;vertical-align:-2px;letter-spacing:0">^</span>1 S</div>
<div class="b" style="left:939px;top:125px;width:41px;height:15px;line-height:14.5px;font-size:9.5px;letter-spacing:-0.45px"><span style="font-size:7px;vertical-align:-2px;letter-spacing:0">^</span>0.5 S</div>
<div class="b" style="left:981px;top:125px;width:41px;height:15px;line-height:14.5px;font-size:9.5px;letter-spacing:-0.45px"><span style="font-size:7px;vertical-align:-2px;letter-spacing:0">^</span>0.2 S</div>
<div class="b" style="left:898px;top:140px;width:41px;height:15px;line-height:14.5px;font-size:9.5px;letter-spacing:-0.45px"><span style="font-size:7px;vertical-align:-2px;letter-spacing:0">^</span>0.1 S</div>
<div class="b" style="left:939px;top:140px;width:41px;height:15px;line-height:14.5px;font-size:9.5px;letter-spacing:-0.45px">50 mS</div>
<div class="b" style="left:981px;top:140px;width:41px;height:15px;line-height:14.5px;font-size:9.5px;letter-spacing:-0.45px">20 mS</div>
<div class="b" style="left:898px;top:155px;width:41px;height:15px;line-height:14.5px;font-size:9.5px;letter-spacing:-0.45px">10 mS</div>
<div class="b" style="left:939px;top:155px;width:41px;height:15px;line-height:14.5px;font-size:9.5px;letter-spacing:-0.45px">5 mS</div>
<div class="b" style="left:981px;top:155px;width:41px;height:15px;line-height:14.5px;font-size:9.5px;letter-spacing:-0.45px">2 mS</div>
<div class="b" style="left:898px;top:170px;width:41px;height:15px;line-height:14.5px;font-size:9.5px;letter-spacing:-0.45px">1 mS</div>
<div class="bp" style="left:939px;top:170px;width:41px;height:15px;line-height:14.5px;font-size:9.5px;letter-spacing:-0.45px">0.5 mS</div>
<div class="b" style="left:981px;top:170px;width:41px;height:15px;line-height:14.5px;font-size:9.5px;letter-spacing:-0.45px">0.2 mS</div>
<div class="b" style="left:898px;top:185px;width:41px;height:15px;line-height:14.5px;font-size:9.5px;letter-spacing:-0.45px">0.1 mS</div>
<div class="b" style="left:939px;top:185px;width:41px;height:15px;line-height:14.5px;font-size:9.5px;letter-spacing:-0.45px">50 uS</div>
<div class="b" style="left:981px;top:185px;width:41px;height:15px;line-height:14.5px;font-size:9.5px;letter-spacing:-0.45px">20 uS</div>
<div class="b" style="left:898px;top:200px;width:41px;height:16px;line-height:14.5px;font-size:9.5px;letter-spacing:-0.45px">10 uS</div>
<div class="b" style="left:939px;top:200px;width:41px;height:16px;line-height:14.5px;font-size:9.5px;letter-spacing:-0.45px">5 uS</div>
<div class="b" style="left:981px;top:200px;width:41px;height:16px;line-height:14.5px;font-size:9.5px;letter-spacing:-0.45px">2 uS</div>
<div class="b" style="left:898px;top:216px;width:41px;height:15px;line-height:14.5px;font-size:9.5px;letter-spacing:-0.45px">1 uS</div>
<div class="b" style="left:939px;top:216px;width:41px;height:15px;line-height:14.5px;font-size:9.5px;letter-spacing:-0.45px">0.5 uS</div>
<div class="b" style="left:981px;top:216px;width:41px;height:15px;line-height:14.5px;font-size:9.5px;letter-spacing:-0.45px">0.2 uS</div>
<div class="b" style="left:898px;top:231px;width:41px;height:15px;line-height:14.5px;font-size:9.5px;letter-spacing:-0.45px">0.1 uS</div>
<div class="b" style="left:939px;top:231px;width:41px;height:15px;line-height:14.5px;font-size:9.5px;letter-spacing:-0.45px">50 nS</div>
<div class="b" style="left:981px;top:231px;width:41px;height:15px;line-height:14.5px;font-size:9.5px;letter-spacing:-0.45px"><span style="font-size:7px;vertical-align:-2px;letter-spacing:0">^</span>20 nS</div>
<div class="b" style="left:898px;top:246px;width:41px;height:15px;line-height:14.5px;font-size:9.5px;letter-spacing:-0.45px"><span style="font-size:7px;vertical-align:-2px;letter-spacing:0">^</span>10 nS</div>
<div class="b" style="left:939px;top:246px;width:41px;height:15px;line-height:14.5px;font-size:9.5px;letter-spacing:-0.45px"><span style="font-size:7px;vertical-align:-2px;letter-spacing:0">^</span>5 nS</div>
<div class="b" style="left:981px;top:246px;width:41px;height:15px;line-height:14.5px;font-size:9.5px;letter-spacing:-0.45px"><span style="font-size:7px;vertical-align:-2px;letter-spacing:0">^</span>2 nS</div>
<div class="abs" style="left:900px;top:487px;width:8px;height:8px;background:#00e000"></div>
<div class="t" style="left:928px;top:487px;font-size:10px;font-weight:bold;color:#111">A1 V/Div</div>
<div class="t" style="left:983px;top:487.5px;font-size:9px;letter-spacing:-0.6px;color:#404050">BW</div>
<svg class="abs" style="left:0;top:0;overflow:visible" width="1" height="1"><path d="M1003.5 490.5 L1007.5 487.3 Q1008 487 1008.5 487.4 L1014.5 493 Q1015 493.4 1015.5 493 L1019 490" fill="none" stroke="#b4b4b4" stroke-width="1.3"/></svg>
<div class="bp" style="left:898px;top:498px;width:41px;height:15px;line-height:14.5px;font-size:9.5px;letter-spacing:-0.45px">0.1 V</div>
<div class="b" style="left:939px;top:498px;width:41px;height:15px;line-height:14.5px;font-size:9.5px;letter-spacing:-0.45px">50 mV</div>
<div class="b" style="left:981px;top:498px;width:41px;height:15px;line-height:14.5px;font-size:9.5px;letter-spacing:-0.45px">20 mV</div>
<div class="b" style="left:898px;top:513px;width:41px;height:15px;line-height:14.5px;font-size:9.5px;letter-spacing:-0.45px">10 mV</div>
<div class="b" style="left:939px;top:513px;width:41px;height:15px;line-height:14.5px;font-size:9.5px;letter-spacing:-0.45px">5 mV</div>
<div class="abs" style="left:900px;top:612px;width:8px;height:8px;background:#f0f000"></div>
<div class="t" style="left:928px;top:612.5px;font-size:10px;font-weight:bold;color:#111">A2 V/Div</div>
<div class="t" style="left:983px;top:612.5px;font-size:9px;letter-spacing:-0.6px;color:#404050">BW</div>
<div class="abs" style="left:1001px;top:608px;width:20px;height:15px;background:#f8f8f8;border-top:2px solid #a8a8a8;border-left:1px solid #a0a0a0"></div>
<svg class="abs" style="left:0;top:0;overflow:visible" width="1" height="1"><path d="M1004 617 L1007.6 613.8 Q1008.2 613.3 1008.8 613.8 L1015 619.6 Q1015.6 620.1 1016.2 619.6 L1019.5 616.5" fill="none" stroke="#000" stroke-width="1.8"/></svg>
<div class="bp" style="left:898px;top:624px;width:41px;height:15px;line-height:14.5px;font-size:9.5px;letter-spacing:-0.45px">2 V</div>
<div class="b" style="left:939px;top:624px;width:41px;height:15px;line-height:14.5px;font-size:9.5px;letter-spacing:-0.45px">1 V</div>
<div class="b" style="left:981px;top:624px;width:41px;height:15px;line-height:14.5px;font-size:9.5px;letter-spacing:-0.45px">0.5 V</div>
<div class="b" style="left:898px;top:639px;width:41px;height:15px;line-height:14.5px;font-size:9.5px;letter-spacing:-0.45px">0.2 V</div>
<div class="b" style="left:939px;top:639px;width:41px;height:15px;line-height:14.5px;font-size:9.5px;letter-spacing:-0.45px">0.1 V</div>
<div class="b" style="left:981px;top:639px;width:41px;height:15px;line-height:14.5px;font-size:9.5px;letter-spacing:-0.45px">50 mV</div>
<div class="b" style="left:898px;top:654px;width:41px;height:15px;line-height:14.5px;font-size:9.5px;letter-spacing:-0.45px">20 mV</div>
<div class="b" style="left:939px;top:654px;width:41px;height:15px;line-height:14.5px;font-size:9.5px;letter-spacing:-0.45px">10 mV</div>
<div class="b" style="left:981px;top:654px;width:41px;height:15px;line-height:14.5px;font-size:9.5px;letter-spacing:-0.45px">5 mV</div>
<div class="abs" style="left:899px;top:757px;width:9px;height:9px;border:1px solid #d0d0d0;background:#f4f4f4"></div>
<div class="t" style="left:933px;top:758px;font-size:10px;font-weight:bold;color:#111">Trigger</div>
<div class="bp" style="left:979px;top:754px;width:43px;height:15px;background:#f4f4f4"></div>
<div class="t" style="left:982px;top:757px;font-size:10px;font-weight:bold;color:#111">A1</div>
<div class="b" style="left:1008px;top:755px;width:13px;height:13px"></div>
<svg class="abs" style="left:1010px;top:759px" width="9" height="6"><path d="M1 1 H8 L4.5 5Z" fill="#000"/></svg>
<div class="b" style="left:898px;top:770px;width:31px;height:15px;line-height:13px;font-size:10px;font-weight:bold">ON</div>
<div class="bp" style="left:929px;top:770px;width:30px;height:15px;line-height:13px;font-size:10px;"></div>
<div class="b" style="left:961px;top:770px;width:31px;height:15px;line-height:13px;font-size:10px;">Auto</div>
<div class="b" style="left:992px;top:770px;width:30px;height:15px;line-height:13px;font-size:10px;">T+</div>
<svg class="abs" style="left:0;top:0;overflow:visible" width="1" height="1"><path d="M936 773.8 H940 L946.5 780.5 Q948.5 783 954.5 783" fill="none" stroke="#000" stroke-width="1.6"/><path d="M948 782 L945.6 774.8 L940.8 779.6Z" fill="#000"/></svg>
</body></html>
